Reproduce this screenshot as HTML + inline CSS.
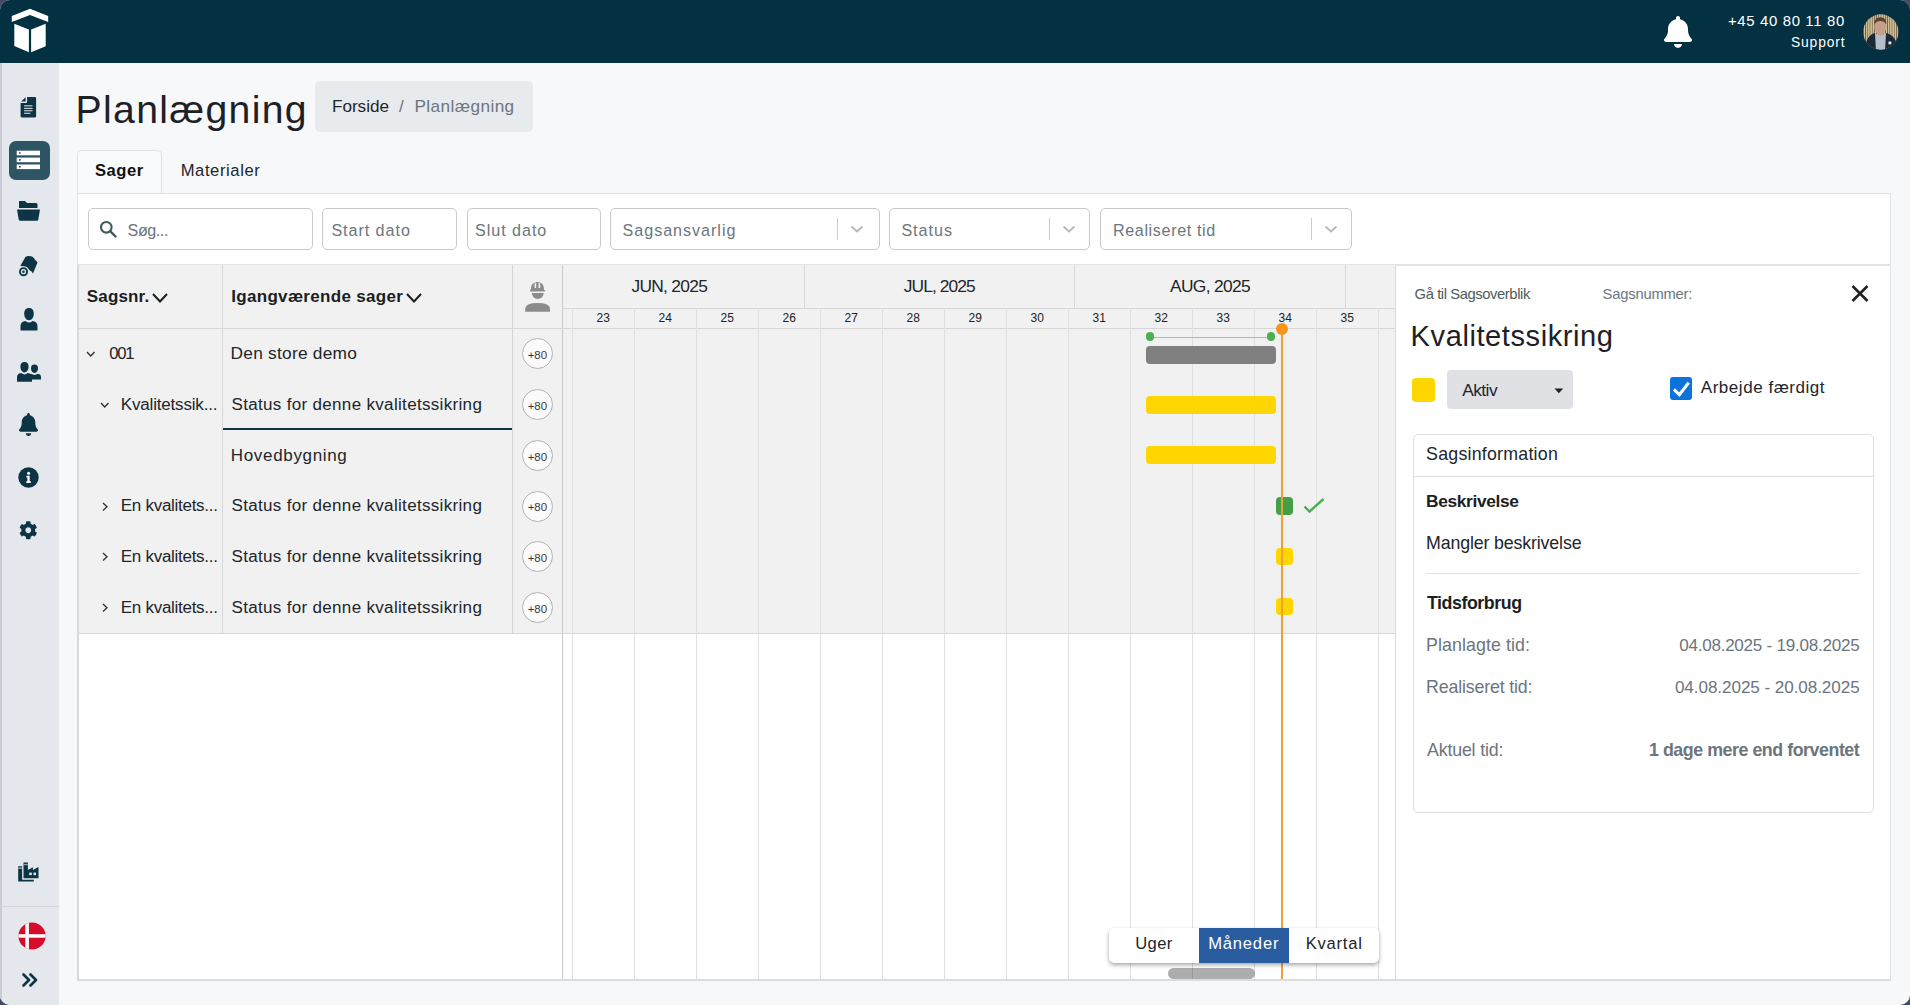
<!DOCTYPE html><html><head><meta charset="utf-8"><style>
html,body{margin:0;padding:0;}
body{width:1910px;height:1005px;overflow:hidden;position:relative;background:#434a62;font-family:"Liberation Sans",sans-serif;}
#w{position:absolute;left:0;top:0;width:1910px;height:1005px;border-radius:10px;overflow:hidden;background:#f7f8fa;}
#w div,#w span,#w svg{position:absolute;}
.t{white-space:pre;line-height:1;}
</style></head><body><div id="w">
<div style="position:absolute;left:0px;top:0px;width:1910px;height:62.5px;background:#033142;"></div>
<svg style="left:0;top:0" width="70" height="62" viewBox="0 0 70 62"><g fill="#fff"><polygon points="11.8,16 30,8.8 48.2,16 48.2,22 30,15 11.8,22"/><polygon points="14.3,23.7 28.9,29.4 28.9,52.3 14.3,46"/><polygon points="31.1,29.4 45.7,23.7 45.7,46.3 31.1,52.3"/></g></svg>
<svg style="left:1664px;top:16px" width="28" height="32" viewBox="0 0 448 512"><path fill="#fff" d="M224 0c-17.7 0-32 14.3-32 32V51.2C119 66 64 130.6 64 208v18.8c0 47-17.3 92.4-48.5 127.6l-7.4 8.3c-8.4 9.4-10.4 22.9-5.3 34.4S19.4 416 32 416H416c12.6 0 24-7.4 29.2-18.9s3.1-25-5.3-34.4l-7.4-8.3C401.3 319.2 384 273.9 384 226.8V208c0-77.4-55-142-128-156.8V32c0-17.7-14.3-32-32-32zm45.3 493.3c12-12 18.7-28.3 18.7-45.3H224 160c0 17 6.7 33.3 18.7 45.3s28.3 18.7 45.3 18.7s33.3-6.7 45.3-18.7z"/></svg>
<svg style="left:1863px;top:13px" width="37" height="38" viewBox="0 0 37 38">
<defs><clipPath id="av"><circle cx="17.8" cy="19" r="17.7"/></clipPath>
<pattern id="st" width="2.2" height="38" patternUnits="userSpaceOnUse"><rect width="2.2" height="38" fill="#d4c29c"/><rect width="0.8" height="38" fill="#6e5c40"/></pattern></defs>
<g clip-path="url(#av)"><rect width="37" height="38" fill="url(#st)"/>
<ellipse cx="17.3" cy="14" rx="6" ry="7.8" fill="#c79e88"/>
<path d="M11.3 11 Q11.5 4.3 17.5 4.3 Q23.5 4.3 23.4 11 Q21 7.6 17.5 7.9 Q14 7.6 11.3 11z" fill="#5b4232"/>
<path d="M2 38 L3.5 28 Q6 22 11.5 20 L17.5 30 L23.5 20 Q30 22 33 28 L36 38z" fill="#1b2836"/>
<path d="M12 20.5 L17.5 23 L23 20.5 L22 38 H13z" fill="#b3c0cc"/>
<rect x="25.5" y="28.5" width="2.8" height="2.8" fill="#e8eef2"/></g></svg>
<div style="position:absolute;left:0px;top:62.5px;width:59px;height:942.5px;background:#e4e7eb;"></div>
<div style="position:absolute;left:0px;top:62.5px;width:1.5px;height:942.5px;background:#c9cdd3;"></div>
<div style="position:absolute;left:0px;top:906px;width:59px;height:1px;background:#d2d5da;"></div>
<svg style="left:14px;top:92px" width="30" height="30" viewBox="0 0 30 30"><path fill="#0c3444" d="M13.1 4.9 H21 Q22.1 4.9 22.1 6 V24.3 Q22.1 25.4 21 25.4 H7.7 Q6.6 25.4 6.6 24.3 V11 H11.6 Q13.1 11 13.1 9.5 Z"/><path fill="#0c3444" d="M7.2 9.6 L11.6 5.3 V9.6 Z"/><g fill="#c5cdd2"><rect x="10.1" y="13.2" width="8.4" height="1.2"/><rect x="10.1" y="15.8" width="8.4" height="1.2"/><rect x="10.1" y="18.1" width="8.4" height="1.2"/><rect x="10.1" y="20.7" width="6.3" height="1.2"/></g></svg>
<div style="position:absolute;left:9px;top:141px;width:40.7px;height:38.8px;background:#2e5563;border-radius:7px;"></div>
<svg style="left:16px;top:150px" width="25" height="20" viewBox="0 0 25 20"><g fill="#fff"><rect x="0.7" y="0.7" width="23.3" height="4.6"/><rect x="0.7" y="7.6" width="23.3" height="4.6"/><rect x="0.7" y="14.5" width="23.3" height="4.6"/></g><g fill="#2e5563"><rect x="3" y="2.2" width="1.6" height="1.6"/><rect x="3" y="9.1" width="1.6" height="1.6"/><rect x="3" y="16" width="1.6" height="1.6"/></g></svg>
<svg style="left:16.5px;top:201px" width="23" height="20" viewBox="0 0 23 20"><path fill="#0c3444" d="M2 0 h6 l2 2 h9 a1.5 1.5 0 0 1 1.5 1.5 V7 H2z M0 8.5 h23 l-1.7 10 a1.5 1.5 0 0 1 -1.5 1.3 H3.2 a1.5 1.5 0 0 1 -1.5 -1.3z"/></svg>
<svg style="left:0px;top:240px" width="59" height="50" viewBox="0 0 59 50"><g transform="translate(12,10)"><path fill="#0c3444" d="M8.3 15.9 L13.4 7 Q15 6 16.6 6 Q19.5 6 20.4 6.8 Q22 7.8 22.9 9.6 L25.5 12.4 L21 23.6 Q19.3 20.5 17.8 20.4 L15 16.9 Z"/><circle cx="11.5" cy="21.7" r="5.4" fill="#e4e7eb"/><circle cx="11.5" cy="21.7" r="4.5" fill="#0c3444"/><circle cx="11.5" cy="21.7" r="2.6" fill="#e4e7eb"/><circle cx="11.5" cy="21.7" r="1.3" fill="#0c3444"/></g></svg>
<svg style="left:19.5px;top:307.5px" width="18" height="23" viewBox="0 0 18 23"><path fill="#0c3444" d="M9 0 C12.5 0 13.8 2.5 13.8 5.5 C13.8 9 12 12.2 9 12.2 C6 12.2 4.2 9 4.2 5.5 C4.2 2.5 5.5 0 9 0z M0.5 18 C0.5 15 2.5 13.5 5.5 13 Q9 16 12.5 13 C15.5 13.5 17.5 15 17.5 18 V22.5 H0.5z"/></svg>
<svg style="left:16.5px;top:362px" width="24" height="20" viewBox="0 0 24 20"><path fill="#0c3444" d="M17.5 2.5 C20 2.5 21 4.2 21 6.3 C21 8.8 19.8 11 17.5 11 C15.2 11 14 8.8 14 6.3 C14 4.2 15 2.5 17.5 2.5z M14 11.8 Q17.5 14 21 11.8 C22.8 12.2 24 13.2 24 15 V17.5 H15 Q15 13.5 12.5 12.5z"/><path fill="#0c3444" d="M7.5 0 C10.4 0 11.6 2.1 11.6 4.6 C11.6 7.6 10.1 10.4 7.5 10.4 C4.9 10.4 3.4 7.6 3.4 4.6 C3.4 2.1 4.6 0 7.5 0z M0 15.2 C0 12.8 1.6 11.5 4.2 11.1 Q7.5 13.8 10.8 11.1 C13.4 11.5 15 12.8 15 15.2 V19.8 H0z"/></svg>
<svg style="left:18.5px;top:412.5px" width="19" height="23" viewBox="0 0 448 512" preserveAspectRatio="none"><path fill="#0c3444" d="M224 0c-17.7 0-32 14.3-32 32V51.2C119 66 64 130.6 64 208v18.8c0 47-17.3 92.4-48.5 127.6l-7.4 8.3c-8.4 9.4-10.4 22.9-5.3 34.4S19.4 416 32 416H416c12.6 0 24-7.4 29.2-18.9s3.1-25-5.3-34.4l-7.4-8.3C401.3 319.2 384 273.9 384 226.8V208c0-77.4-55-142-128-156.8V32c0-17.7-14.3-32-32-32zm45.3 493.3c12-12 18.7-28.3 18.7-45.3H224 160c0 17 6.7 33.3 18.7 45.3s28.3 18.7 45.3 18.7s33.3-6.7 45.3-18.7z"/></svg>
<svg style="left:17.5px;top:466.5px" width="21" height="21" viewBox="0 0 21 21"><circle cx="10.5" cy="10.5" r="10.2" fill="#0c3444"/><circle cx="10.6" cy="6.3" r="1.5" fill="#fff"/><path fill="#fff" d="M8.3 8.8 h3.4 v5.4 h1.1 v1.8 H8.3 v-1.8 h1.1 v-3.6 h-1.1z"/></svg>
<svg style="left:19px;top:521px" width="18.5" height="18.5" viewBox="0 0 512 512"><path fill="#0c3444" d="M487.4 315.7l-42.6-24.6c4.3-23.2 4.3-47 0-70.2l42.6-24.6c4.9-2.8 7.1-8.6 5.5-14-11.1-35.6-30-67.8-54.7-94.6-3.8-4.1-10-5.1-14.8-2.3L380.8 110c-17.9-15.4-38.5-27.3-60.8-35.1V25.8c0-5.6-3.9-10.5-9.4-11.7-36.7-8.2-74.3-7.8-109.2 0-5.5 1.2-9.4 6.1-9.4 11.7V75c-22.2 7.9-42.8 19.8-60.8 35.1L88.7 85.5c-4.9-2.8-11-1.9-14.8 2.3-24.7 26.7-43.6 58.9-54.7 94.6-1.7 5.4.6 11.2 5.5 14L67.3 221c-4.3 23.2-4.3 47 0 70.2l-42.6 24.6c-4.9 2.8-7.1 8.6-5.5 14 11.1 35.6 30 67.8 54.7 94.6 3.8 4.1 10 5.1 14.8 2.3l42.6-24.6c17.9 15.4 38.5 27.3 60.8 35.1v49.2c0 5.6 3.9 10.5 9.4 11.7 36.7 8.2 74.3 7.8 109.2 0 5.5-1.2 9.4-6.1 9.4-11.7v-49.2c22.2-7.9 42.8-19.8 60.8-35.1l42.6 24.6c4.9 2.8 11 1.9 14.8-2.3 24.7-26.7 43.6-58.9 54.7-94.6 1.5-5.5-.7-11.3-5.6-14.1zM256 336c-44.1 0-80-35.9-80-80s35.9-80 80-80 80 35.9 80 80-35.9 80-80 80z"/></svg>
<svg style="left:14px;top:857px" width="28" height="28" viewBox="0 0 28 28"><path fill="#0c3444" d="M4.2 9.2 H8.1 V22.8 H19.8 V24.5 H4.2 Z"/><path fill="#0c3444" d="M9.5 5.6 H13.9 V13.1 L18.9 10.3 V13.1 L23.9 10.3 H24.5 V21.2 H9.5 Z"/><rect x="4.2" y="10.4" width="3.9" height="1.6" fill="#8ea3aa"/><rect x="9.5" y="6.9" width="4.4" height="1.3" fill="#8ea3aa"/><rect x="15.2" y="15.6" width="2.6" height="2.5" fill="#e4e7eb"/><rect x="19.5" y="15.6" width="2.5" height="2.5" fill="#e4e7eb"/></svg>
<svg style="left:17.5px;top:921.5px" width="28" height="28" viewBox="0 0 28 28"><defs><clipPath id="fc"><circle cx="14" cy="14" r="13.6"/></clipPath></defs><g clip-path="url(#fc)"><rect width="28" height="28" fill="#d50c2a"/><rect x="7.3" y="0" width="3.6" height="28" fill="#fff"/><rect x="0" y="12.2" width="28" height="3.5" fill="#fff"/></g></svg>
<svg style="left:22px;top:973px" width="16" height="14" viewBox="0 0 16 14"><path d="M1.5 1.5 L7 7 L1.5 12.5 M8.5 1.5 L14 7 L8.5 12.5" fill="none" stroke="#0c3444" stroke-width="2.6" stroke-linecap="round" stroke-linejoin="round"/></svg>
<div style="position:absolute;left:315.3px;top:81.2px;width:217.3px;height:50.4px;background:#e8ebee;border-radius:5px;"></div>
<div style="position:absolute;left:77px;top:150.3px;width:84.5px;height:43.7px;background:#f9fafb;border:1px solid #dfe2e6;border-bottom:none;border-radius:5px 5px 0 0;box-sizing:border-box;"></div>
<div style="position:absolute;left:77px;top:193px;width:1814px;height:787.5px;background:#fff;border:1px solid #dfe2e6;box-sizing:border-box;"></div>
<div style="position:absolute;left:88.4px;top:208px;width:224.2px;height:42px;background:#fff;border:1px solid #c9c9c9;border-radius:5px;box-sizing:border-box;"></div>
<div style="position:absolute;left:322px;top:208px;width:134.5px;height:42px;background:#fff;border:1px solid #c9c9c9;border-radius:5px;box-sizing:border-box;"></div>
<div style="position:absolute;left:466.5px;top:208px;width:134.2px;height:42px;background:#fff;border:1px solid #c9c9c9;border-radius:5px;box-sizing:border-box;"></div>
<div style="position:absolute;left:610.4px;top:208px;width:269.2px;height:42px;background:#fff;border:1px solid #c9c9c9;border-radius:5px;box-sizing:border-box;"></div>
<div style="position:absolute;left:837px;top:218px;width:1px;height:21.5px;background:#cbcbcb;"></div>
<svg style="left:849px;top:221px" width="16" height="16" viewBox="0 0 16 16"><path d="M2.5 5.5 L8 10.5 L13.5 5.5" fill="none" stroke="#b5b9bd" stroke-width="2"/></svg>
<div style="position:absolute;left:889px;top:208px;width:201.4px;height:42px;background:#fff;border:1px solid #c9c9c9;border-radius:5px;box-sizing:border-box;"></div>
<div style="position:absolute;left:1049px;top:218px;width:1px;height:21.5px;background:#cbcbcb;"></div>
<svg style="left:1061px;top:221px" width="16" height="16" viewBox="0 0 16 16"><path d="M2.5 5.5 L8 10.5 L13.5 5.5" fill="none" stroke="#b5b9bd" stroke-width="2"/></svg>
<div style="position:absolute;left:1100.3px;top:208px;width:252.2px;height:42px;background:#fff;border:1px solid #c9c9c9;border-radius:5px;box-sizing:border-box;"></div>
<div style="position:absolute;left:1311px;top:218px;width:1px;height:21.5px;background:#cbcbcb;"></div>
<svg style="left:1323px;top:221px" width="16" height="16" viewBox="0 0 16 16"><path d="M2.5 5.5 L8 10.5 L13.5 5.5" fill="none" stroke="#b5b9bd" stroke-width="2"/></svg>
<svg style="left:99px;top:220px" width="19" height="18" viewBox="0 0 19 18"><circle cx="7.3" cy="7.3" r="5.3" fill="none" stroke="#3e5b5b" stroke-width="2.1"/><path d="M11.2 11.2 L16.5 16.5" stroke="#3e5b5b" stroke-width="2.4" stroke-linecap="round"/></svg>
<div style="position:absolute;left:78px;top:264px;width:1813px;height:1.5px;background:#e3e3e3;"></div>
<div style="position:absolute;left:78px;top:265px;width:1317px;height:368.5px;background:#f1f1f1;"></div>
<div style="position:absolute;left:78px;top:328px;width:484.5px;height:1px;background:#d6d6d6;"></div>
<div style="position:absolute;left:78px;top:633px;width:1317px;height:1px;background:#d9d9d9;"></div>
<div style="position:absolute;left:222px;top:265px;width:1px;height:368.5px;background:#d6d6d6;"></div>
<div style="position:absolute;left:512px;top:265px;width:1px;height:368.5px;background:#d6d6d6;"></div>
<div style="position:absolute;left:562px;top:265px;width:1px;height:715px;background:#c9c9c9;"></div>
<div style="position:absolute;left:562px;top:308px;width:833px;height:1px;background:#d6d6d6;"></div>
<div style="position:absolute;left:562px;top:328px;width:833px;height:1px;background:#d6d6d6;"></div>
<div style="position:absolute;left:804px;top:265px;width:1px;height:43px;background:#d9d9d9;"></div>
<div style="position:absolute;left:1074px;top:265px;width:1px;height:43px;background:#d9d9d9;"></div>
<div style="position:absolute;left:1345px;top:265px;width:1px;height:43px;background:#d9d9d9;"></div>
<div style="position:absolute;left:572px;top:308px;width:1px;height:672px;background:#e0e0e0;"></div>
<div style="position:absolute;left:634px;top:308px;width:1px;height:672px;background:#e0e0e0;"></div>
<div style="position:absolute;left:696px;top:308px;width:1px;height:672px;background:#e0e0e0;"></div>
<div style="position:absolute;left:758px;top:308px;width:1px;height:672px;background:#e0e0e0;"></div>
<div style="position:absolute;left:820px;top:308px;width:1px;height:672px;background:#e0e0e0;"></div>
<div style="position:absolute;left:882px;top:308px;width:1px;height:672px;background:#e0e0e0;"></div>
<div style="position:absolute;left:944px;top:308px;width:1px;height:672px;background:#e0e0e0;"></div>
<div style="position:absolute;left:1006px;top:308px;width:1px;height:672px;background:#e0e0e0;"></div>
<div style="position:absolute;left:1068px;top:308px;width:1px;height:672px;background:#e0e0e0;"></div>
<div style="position:absolute;left:1130px;top:308px;width:1px;height:672px;background:#e0e0e0;"></div>
<div style="position:absolute;left:1192px;top:308px;width:1px;height:672px;background:#e0e0e0;"></div>
<div style="position:absolute;left:1254px;top:308px;width:1px;height:672px;background:#e0e0e0;"></div>
<div style="position:absolute;left:1316px;top:308px;width:1px;height:672px;background:#e0e0e0;"></div>
<div style="position:absolute;left:1378px;top:308px;width:1px;height:672px;background:#e0e0e0;"></div>
<div style="position:absolute;left:1395px;top:265px;width:1px;height:715px;background:#d9d9d9;"></div>
<span class="t" style="left:563.2px;width:80px;text-align:center;top:311.84px;font-size:12px;color:#222;">23</span>
<span class="t" style="left:625.2px;width:80px;text-align:center;top:311.84px;font-size:12px;color:#222;">24</span>
<span class="t" style="left:687.2px;width:80px;text-align:center;top:311.84px;font-size:12px;color:#222;">25</span>
<span class="t" style="left:749.2px;width:80px;text-align:center;top:311.84px;font-size:12px;color:#222;">26</span>
<span class="t" style="left:811.2px;width:80px;text-align:center;top:311.84px;font-size:12px;color:#222;">27</span>
<span class="t" style="left:873.2px;width:80px;text-align:center;top:311.84px;font-size:12px;color:#222;">28</span>
<span class="t" style="left:935.2px;width:80px;text-align:center;top:311.84px;font-size:12px;color:#222;">29</span>
<span class="t" style="left:997.2px;width:80px;text-align:center;top:311.84px;font-size:12px;color:#222;">30</span>
<span class="t" style="left:1059.2px;width:80px;text-align:center;top:311.84px;font-size:12px;color:#222;">31</span>
<span class="t" style="left:1121.2px;width:80px;text-align:center;top:311.84px;font-size:12px;color:#222;">32</span>
<span class="t" style="left:1183.2px;width:80px;text-align:center;top:311.84px;font-size:12px;color:#222;">33</span>
<span class="t" style="left:1245.2px;width:80px;text-align:center;top:311.84px;font-size:12px;color:#222;">34</span>
<span class="t" style="left:1307.2px;width:80px;text-align:center;top:311.84px;font-size:12px;color:#222;">35</span>
<div style="position:absolute;left:222.5px;top:428px;width:289.5px;height:2px;background:#0c3444;"></div>
<div style="left:521.9px;top:338.3px;width:31px;height:31px;border-radius:50%;border:1px solid #b3b3b3;background:#fbfbfb;box-sizing:border-box;"></div>
<span class="t" style="left:517.4px;width:40px;text-align:center;top:350.07px;font-size:11.5px;color:#3a3a3a;">+80</span>
<div style="left:521.9px;top:389.05px;width:31px;height:31px;border-radius:50%;border:1px solid #b3b3b3;background:#fbfbfb;box-sizing:border-box;"></div>
<span class="t" style="left:517.4px;width:40px;text-align:center;top:400.82px;font-size:11.5px;color:#3a3a3a;">+80</span>
<div style="left:521.9px;top:439.8px;width:31px;height:31px;border-radius:50%;border:1px solid #b3b3b3;background:#fbfbfb;box-sizing:border-box;"></div>
<span class="t" style="left:517.4px;width:40px;text-align:center;top:451.57px;font-size:11.5px;color:#3a3a3a;">+80</span>
<div style="left:521.9px;top:490.55px;width:31px;height:31px;border-radius:50%;border:1px solid #b3b3b3;background:#fbfbfb;box-sizing:border-box;"></div>
<span class="t" style="left:517.4px;width:40px;text-align:center;top:502.32px;font-size:11.5px;color:#3a3a3a;">+80</span>
<div style="left:521.9px;top:541.3px;width:31px;height:31px;border-radius:50%;border:1px solid #b3b3b3;background:#fbfbfb;box-sizing:border-box;"></div>
<span class="t" style="left:517.4px;width:40px;text-align:center;top:553.07px;font-size:11.5px;color:#3a3a3a;">+80</span>
<div style="left:521.9px;top:592.05px;width:31px;height:31px;border-radius:50%;border:1px solid #b3b3b3;background:#fbfbfb;box-sizing:border-box;"></div>
<span class="t" style="left:517.4px;width:40px;text-align:center;top:603.82px;font-size:11.5px;color:#3a3a3a;">+80</span>
<svg style="left:517px;top:276px" width="40" height="40" viewBox="0 0 40 40"><g fill="#8c8c8c"><path d="M13.7 14.3 Q13.7 7 19.1 6.3 V12 H21.7 V6.3 Q27.1 7 27.1 14.3 Z"/><rect x="19.1" y="6" width="2.6" height="7"/><rect x="12.9" y="13.9" width="15.2" height="1.5" rx="0.6"/><path d="M14.9 17.1 H26.7 A5.9 6 0 0 1 14.9 17.1 Z"/><path d="M8.2 35.8 V33 Q8.2 27.1 20.6 27.1 Q33 27.1 33 33 V35.8 Z"/></g><g fill="#f1f1f1"><rect x="17.6" y="7.2" width="1.5" height="4.8"/><rect x="21.7" y="7.2" width="1.5" height="4.8"/></g></svg>
<svg style="left:151.4px;top:291.5px" width="18" height="11.5" viewBox="0 0 18 11.5"><path d="M2 2 L9.0 9.5 L16 2" fill="none" stroke="#1b1e22" stroke-width="2"/></svg>
<svg style="left:405px;top:291.5px" width="18" height="11.5" viewBox="0 0 18 11.5"><path d="M2 2 L9.0 9.5 L16 2" fill="none" stroke="#1b1e22" stroke-width="2"/></svg>
<svg style="left:85.3px;top:350px" width="11.5" height="8" viewBox="0 0 11.5 8"><path d="M2 2 L5.75 6 L9.5 2" fill="none" stroke="#333" stroke-width="1.4"/></svg>
<svg style="left:99.3px;top:400.8px" width="11.5" height="8" viewBox="0 0 11.5 8"><path d="M2 2 L5.75 6 L9.5 2" fill="none" stroke="#333" stroke-width="1.4"/></svg>
<svg style="left:101px;top:500.59999999999997px" width="8" height="11.4" viewBox="0 0 8 11.4"><path d="M2 2 L6 5.7 L2 9.4" fill="none" stroke="#333" stroke-width="1.35"/></svg>
<svg style="left:101px;top:551.3px" width="8" height="11.4" viewBox="0 0 8 11.4"><path d="M2 2 L6 5.7 L2 9.4" fill="none" stroke="#333" stroke-width="1.35"/></svg>
<svg style="left:101px;top:602.0px" width="8" height="11.4" viewBox="0 0 8 11.4"><path d="M2 2 L6 5.7 L2 9.4" fill="none" stroke="#333" stroke-width="1.35"/></svg>
<div style="position:absolute;left:1150px;top:336.5px;width:121px;height:1.0px;background:#b5b5b5;"></div>
<div style="left:1146px;top:332.3px;width:8.4px;height:8.4px;border-radius:50%;background:#4caf50;"></div>
<div style="left:1266.8px;top:332.3px;width:8.4px;height:8.4px;border-radius:50%;background:#4caf50;"></div>
<div style="position:absolute;left:1146px;top:346.1px;width:130px;height:17.5px;background:#808080;border-radius:4px;"></div>
<div style="position:absolute;left:1146px;top:396px;width:130px;height:17.7px;background:#ffd600;border-radius:4px;"></div>
<div style="position:absolute;left:1146px;top:445.6px;width:130px;height:18.0px;background:#ffd600;border-radius:4px;"></div>
<div style="position:absolute;left:1276px;top:497px;width:17px;height:17.8px;background:#43a047;border-radius:4px;"></div>
<div style="position:absolute;left:1276px;top:548px;width:17px;height:17.4px;background:#ffd600;border-radius:4px;"></div>
<div style="position:absolute;left:1276px;top:597.8px;width:17px;height:17.5px;background:#ffd600;border-radius:4px;"></div>
<svg style="left:1302px;top:496px" width="24" height="20" viewBox="0 0 24 20"><path d="M2.5 10.5 L7.5 15.5 L21.5 3" fill="none" stroke="#4caf50" stroke-width="2.4"/></svg>
<div style="position:absolute;left:1280.5px;top:329px;width:2.2px;height:651px;background:#eea236;"></div>
<div style="left:1275.5px;top:322.7px;width:12px;height:12px;border-radius:50%;background:#f7941d;"></div>
<div style="left:1109px;top:928px;width:270px;height:34.6px;background:#fff;border-radius:5px;box-shadow:0 2px 4px rgba(0,0,0,0.35);"></div>
<div style="position:absolute;left:1199.2px;top:928px;width:89.5px;height:34.6px;background:#2a5d9f;"></div>
<div style="left:1168px;top:967.8px;width:86.5px;height:11px;border-radius:6px;background:rgba(0,0,0,0.32);"></div>
<div style="position:absolute;left:1396px;top:265.5px;width:494px;height:714.5px;background:#fff;"></div>
<svg style="left:1850px;top:283.5px" width="20" height="19" viewBox="0 0 20 19"><path d="M2.5 2 L17.5 17 M17.5 2 L2.5 17" stroke="#222" stroke-width="2.6"/></svg>
<div style="position:absolute;left:1412px;top:378px;width:22.7px;height:23.9px;background:#ffd600;border-radius:4px;"></div>
<div style="position:absolute;left:1447px;top:370px;width:125.9px;height:38.7px;background:#dfe1e5;border-radius:4px;"></div>
<svg style="left:1554px;top:387.5px" width="10" height="6" viewBox="0 0 10 6"><path d="M0.5 0.5 H9.2 L4.85 5.2z" fill="#222"/></svg>
<div style="position:absolute;left:1670.2px;top:376.8px;width:22.1px;height:22.8px;background:#0b74da;border-radius:3px;"></div>
<svg style="left:1670px;top:377px" width="22.5" height="22.5" viewBox="0 0 22 22"><path d="M3.8 12 L9.2 17.2 L18.3 5.5" fill="none" stroke="#fff" stroke-width="3"/></svg>
<div style="position:absolute;left:1412.5px;top:433.8px;width:461.2px;height:379.2px;background:#fff;border:1px solid #dcdfe3;border-radius:5px;box-sizing:border-box;"></div>
<div style="position:absolute;left:1413.5px;top:476px;width:459.2px;height:1px;background:#dcdfe3;"></div>
<div style="position:absolute;left:1426.4px;top:573px;width:433.5px;height:1px;background:#e3e3e3;"></div>
<div style="position:absolute;left:77px;top:265px;width:2px;height:716px;background:#d9d9d9;"></div>
<div style="position:absolute;left:77px;top:979px;width:1814px;height:2px;background:#dcdcdc;"></div>
<span class="t" style="left:1728px;top:14.36px;font-size:14.93px;font-weight:500;letter-spacing:0.643px;color:#ffffff;">+45 40 80 11 80</span>
<span class="t" style="left:1791px;top:35.76px;font-size:13.87px;font-weight:400;letter-spacing:0.833px;color:#ffffff;">Support</span>
<span class="t" style="left:75.6px;top:89.53px;font-size:39.19px;font-weight:400;letter-spacing:1.32px;color:#1d2126;">Planlægning</span>
<span class="t" style="left:332px;top:97.76px;font-size:17.18px;font-weight:400;letter-spacing:-0.05px;color:#212529;">Forside</span>
<span class="t" style="left:399px;top:97.76px;font-size:17.18px;font-weight:400;letter-spacing:0.7px;color:#6c757d;">/</span>
<span class="t" style="left:414.4px;top:97.76px;font-size:17.18px;font-weight:400;letter-spacing:0.43px;color:#6c757d;">Planlægning</span>
<span class="t" style="left:95px;top:162.77px;font-size:16.58px;font-weight:700;letter-spacing:0.525px;color:#111111;">Sager</span>
<span class="t" style="left:180.7px;top:162.77px;font-size:16.58px;font-weight:400;letter-spacing:0.6px;color:#212529;">Materialer</span>
<span class="t" style="left:127.6px;top:221.55px;font-size:16.13px;font-weight:400;letter-spacing:-0.44px;color:#6c757d;">Søg...</span>
<span class="t" style="left:331.4px;top:221.85px;font-size:16.13px;font-weight:400;letter-spacing:0.956px;color:#6c757d;">Start dato</span>
<span class="t" style="left:475px;top:221.85px;font-size:16.13px;font-weight:400;letter-spacing:0.963px;color:#6c757d;">Slut dato</span>
<span class="t" style="left:622.6px;top:221.85px;font-size:16.13px;font-weight:400;letter-spacing:0.967px;color:#6c757d;">Sagsansvarlig</span>
<span class="t" style="left:901.4px;top:221.85px;font-size:16.13px;font-weight:400;letter-spacing:0.98px;color:#6c757d;">Status</span>
<span class="t" style="left:1112.9px;top:221.85px;font-size:16.13px;font-weight:400;letter-spacing:0.646px;color:#6c757d;">Realiseret tid</span>
<span class="t" style="left:86.8px;top:288.48px;font-size:17.03px;font-weight:700;letter-spacing:0.15px;color:#1b1e22;">Sagsnr.</span>
<span class="t" style="left:231.2px;top:288.48px;font-size:17.03px;font-weight:700;letter-spacing:0.312px;color:#1b1e22;">Igangværende sager</span>
<span class="t" style="left:631.4px;top:277.88px;font-size:17.39px;font-weight:400;letter-spacing:-0.7px;color:#212529;">JUN, 2025</span>
<span class="t" style="left:903.8px;top:277.88px;font-size:17.39px;font-weight:400;letter-spacing:-0.925px;color:#212529;">JUL, 2025</span>
<span class="t" style="left:1170px;top:277.88px;font-size:17.39px;font-weight:400;letter-spacing:-0.675px;color:#212529;">AUG, 2025</span>
<span class="t" style="left:109.3px;top:345.59px;font-size:16.67px;font-weight:400;letter-spacing:-1.25px;color:#212529;">001</span>
<span class="t" style="left:230.6px;top:345.03px;font-size:17.33px;font-weight:400;letter-spacing:0.231px;color:#212529;">Den store demo</span>
<span class="t" style="left:120.8px;top:395.98px;font-size:17.03px;font-weight:400;letter-spacing:-0.186px;color:#212529;">Kvalitetssik...</span>
<span class="t" style="left:231.5px;top:395.98px;font-size:17.03px;font-weight:400;letter-spacing:0.316px;color:#212529;">Status for denne kvalitetssikring</span>
<span class="t" style="left:230.8px;top:446.68px;font-size:17.03px;font-weight:400;letter-spacing:0.655px;color:#212529;">Hovedbygning</span>
<span class="t" style="left:120.8px;top:497.38px;font-size:17.03px;font-weight:400;letter-spacing:-0.293px;color:#212529;">En kvalitets...</span>
<span class="t" style="left:231.5px;top:497.38px;font-size:17.03px;font-weight:400;letter-spacing:0.316px;color:#212529;">Status for denne kvalitetssikring</span>
<span class="t" style="left:120.8px;top:548.08px;font-size:17.03px;font-weight:400;letter-spacing:-0.293px;color:#212529;">En kvalitets...</span>
<span class="t" style="left:231.5px;top:548.08px;font-size:17.03px;font-weight:400;letter-spacing:0.316px;color:#212529;">Status for denne kvalitetssikring</span>
<span class="t" style="left:120.8px;top:598.78px;font-size:17.03px;font-weight:400;letter-spacing:-0.293px;color:#212529;">En kvalitets...</span>
<span class="t" style="left:231.5px;top:598.78px;font-size:17.03px;font-weight:400;letter-spacing:0.316px;color:#212529;">Status for denne kvalitetssikring</span>
<span class="t" style="left:1414.6px;top:287.4px;font-size:14.77px;font-weight:400;letter-spacing:-0.411px;color:#4d5b5b;">Gå til Sagsoverblik</span>
<span class="t" style="left:1602.6px;top:287.4px;font-size:14.77px;font-weight:400;letter-spacing:-0.21px;color:#6c757d;">Sagsnummer:</span>
<span class="t" style="left:1410.6px;top:322.48px;font-size:29.09px;font-weight:400;letter-spacing:0.567px;color:#1d2126;">Kvalitetssikring</span>
<span class="t" style="left:1462.3px;top:381.83px;font-size:17.33px;font-weight:400;letter-spacing:-0.575px;color:#212529;">Aktiv</span>
<span class="t" style="left:1700.8px;top:379.18px;font-size:17.03px;font-weight:400;letter-spacing:0.529px;color:#212529;">Arbejde færdigt</span>
<span class="t" style="left:1426.1px;top:446.14px;font-size:17.79px;font-weight:400;letter-spacing:0.229px;color:#212529;">Sagsinformation</span>
<span class="t" style="left:1426px;top:493.23px;font-size:17.33px;font-weight:700;letter-spacing:-0.34px;color:#1b1e22;">Beskrivelse</span>
<span class="t" style="left:1426px;top:534.84px;font-size:17.79px;font-weight:400;letter-spacing:-0.144px;color:#212529;">Mangler beskrivelse</span>
<span class="t" style="left:1427px;top:595.14px;font-size:17.79px;font-weight:700;letter-spacing:-0.44px;color:#1b1e22;">Tidsforbrug</span>
<span class="t" style="left:1426.1px;top:636.84px;font-size:17.79px;font-weight:400;letter-spacing:0.077px;color:#6c757d;">Planlagte tid:</span>
<span class="t" style="left:1679.2px;top:637.42px;font-size:17.1px;font-weight:400;letter-spacing:-0.264px;color:#6c757d;">04.08.2025 - 19.08.2025</span>
<span class="t" style="left:1426px;top:678.84px;font-size:17.79px;font-weight:400;letter-spacing:-0.164px;color:#6c757d;">Realiseret tid:</span>
<span class="t" style="left:1674.9px;top:679.42px;font-size:17.1px;font-weight:400;letter-spacing:-0.068px;color:#6c757d;">04.08.2025 - 20.08.2025</span>
<span class="t" style="left:1427px;top:742.44px;font-size:17.79px;font-weight:400;letter-spacing:-0.17px;color:#6c757d;">Aktuel tid:</span>
<span class="t" style="left:1649px;top:742.44px;font-size:17.79px;font-weight:700;letter-spacing:-0.442px;color:#6c757d;">1 dage mere end forventet</span>
<span class="t" style="left:1135.2px;top:936.47px;font-size:16.58px;font-weight:400;letter-spacing:0.4px;color:#212529;">Uger</span>
<span class="t" style="left:1208.2px;top:936.47px;font-size:16.58px;font-weight:500;letter-spacing:0.8px;color:#ffffff;">Måneder</span>
<span class="t" style="left:1305.7px;top:936.47px;font-size:16.58px;font-weight:400;letter-spacing:0.767px;color:#212529;">Kvartal</span>
</div></body></html>
